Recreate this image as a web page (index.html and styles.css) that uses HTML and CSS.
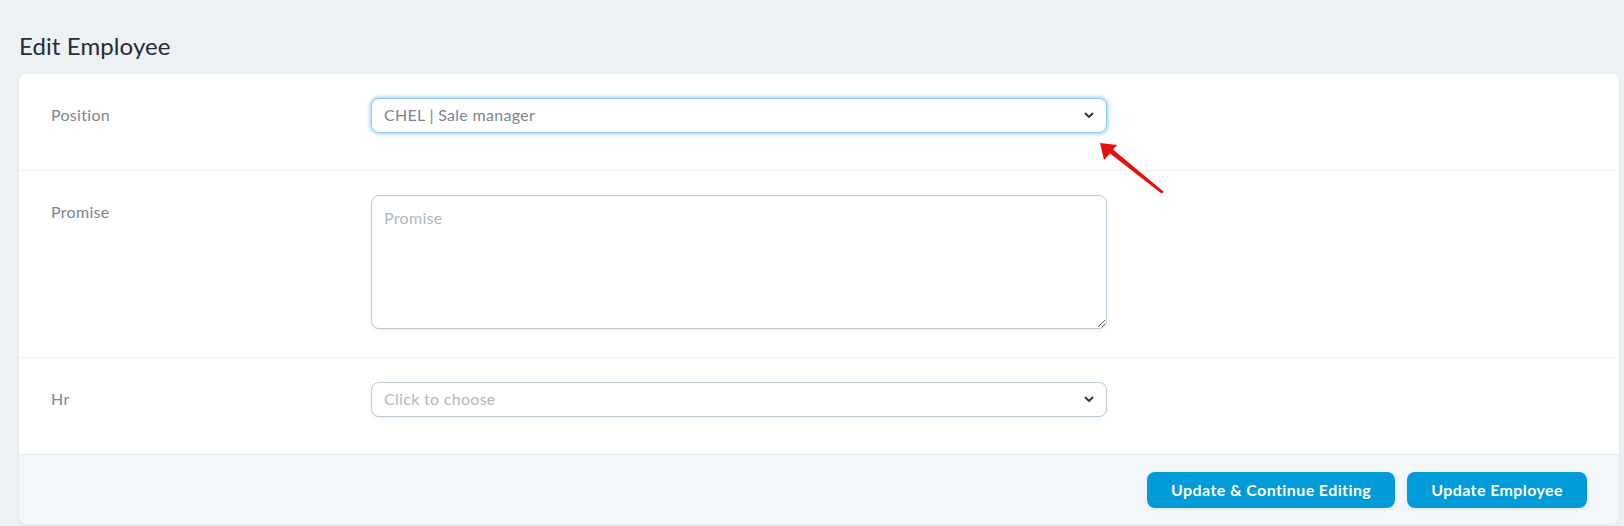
FILE: index.html
```html
<!DOCTYPE html>
<html lang="en">
<head>
<meta charset="utf-8">
<title>Edit Employee</title>
<link rel="stylesheet" href="styles.css">
</head>
<body>
<div class="page">
  <h1 class="title">Edit Employee</h1>
  <form class="card">
    <div class="row row-position">
      <div class="label-col"><label class="label">Position</label></div>
      <div class="field-col">
        <div class="select-wrap">
          <select class="select select-focus">
            <option>CHEL | Sale manager</option>
          </select>
          <svg class="chevron" viewBox="0 0 10 6" width="10" height="6"><path d="M1 1 L5 5 L9 1" fill="none" stroke="#35393c" stroke-width="2"/></svg>
        </div>
      </div>
    </div>
    <div class="row row-promise">
      <div class="label-col"><label class="label">Promise</label></div>
      <div class="field-col">
        <textarea class="textarea" placeholder="Promise"></textarea>
      </div>
    </div>
    <div class="row row-hr">
      <div class="label-col"><label class="label">Hr</label></div>
      <div class="field-col">
        <div class="select-wrap">
          <select class="select placeholder">
            <option>Click to choose</option>
          </select>
          <svg class="chevron" viewBox="0 0 10 6" width="10" height="6"><path d="M1 1 L5 5 L9 1" fill="none" stroke="#35393c" stroke-width="2"/></svg>
        </div>
      </div>
    </div>
    <div class="footer">
      <button type="button" class="btn">Update &amp; Continue Editing</button>
      <button type="button" class="btn">Update Employee</button>
    </div>
  </form>
  <svg class="annotation" width="80" height="64" viewBox="1095 138 80 64">
    <path d="M1164 192 L1161.5 193.5 L1110 153.5 L1104 160 L1100 143 L1117 145 L1113 149.5 Z" fill="#e8100f"/>
  </svg>
</div>
</body>
</html>
```

FILE: styles.css
```css
html, body {
  margin: 0;
  padding: 0;
}

body {
  background: #edf1f4;
  font-family: "Lato", "Noto Sans", sans-serif;
  height: 526px;
  overflow: hidden;
}

.page {
  position: relative;
  padding: 27px 5px 0 19px;
}

.title {
  margin: 0 0 10px 0;
  font-size: 24px;
  line-height: 37px;
  font-weight: 400;
  color: #252d37;
  letter-spacing: 0.1px;
}

.card {
  width: 1600px;
  background: #ffffff;
  border-radius: 8px;
  box-shadow: 0 2px 4px rgba(0, 0, 0, 0.05);
  overflow: hidden;
}

.row {
  display: flex;
  border-bottom: 1px solid #eef1f4;
}

.row-position {
  height: 96px;
}

.row-promise {
  height: 186px;
}

.row-hr {
  height: 96px;
  border-bottom: 1px solid #e7ecf0;
}

.label-col {
  width: 320px;
  box-sizing: border-box;
  padding: 24px 32px 0 32px;
}

.label {
  display: block;
  padding-top: 5px;
  font-size: 16px;
  line-height: 24px;
  color: #7c858e;
  letter-spacing: 0.3px;
}

.field-col {
  width: 800px;
  box-sizing: border-box;
  padding: 24px 32px 0 32px;
}

.select-wrap {
  position: relative;
  width: 736px;
}

.select {
  display: block;
  width: 736px;
  height: 35px;
  box-sizing: border-box;
  margin: 0;
  padding: 0 36px 3px 12px;
  -webkit-appearance: none;
  appearance: none;
  background: #ffffff;
  border: 1px solid #bacad6;
  border-radius: 8px;
  font-family: inherit;
  font-size: 16px;
  letter-spacing: 0.3px;
  color: #7c858e;
  box-shadow: 0 2px 4px rgba(0, 0, 0, 0.05);
  outline: none;
}

.select-focus {
  border-color: #8fc9ea;
  box-shadow: 0 0 3px 2px rgba(128, 196, 236, 0.55);
}

.placeholder {
  color: #b1b8bf;
}

.chevron {
  position: absolute;
  right: 13px;
  top: 14px;
  pointer-events: none;
}

.textarea {
  display: block;
  width: 736px;
  height: 134px;
  box-sizing: border-box;
  margin: 0;
  padding: 10px 12px;
  background: #ffffff;
  border: 1px solid #bacad6;
  border-radius: 8px;
  font-family: inherit;
  font-size: 16px;
  line-height: 24px;
  letter-spacing: 0.3px;
  color: #7c858e;
  box-shadow: 0 2px 4px rgba(0, 0, 0, 0.05);
  outline: none;
}

.textarea::placeholder {
  color: #b1b8bf;
}

.footer {
  display: flex;
  justify-content: flex-end;
  align-items: center;
  gap: 12px;
  height: 69px;
  padding: 0 32px;
  background: #f4f7fa;
}

.btn {
  height: 36px;
  padding: 0 24px;
  border: none;
  border-radius: 8px;
  background: #009bd8;
  color: #ffffff;
  font-family: inherit;
  font-size: 16px;
  font-weight: 700;
  letter-spacing: 0.4px;
  box-shadow: 0 2px 4px rgba(0, 0, 0, 0.05);
}

.annotation {
  position: absolute;
  left: 1095px;
  top: 138px;
}
```
